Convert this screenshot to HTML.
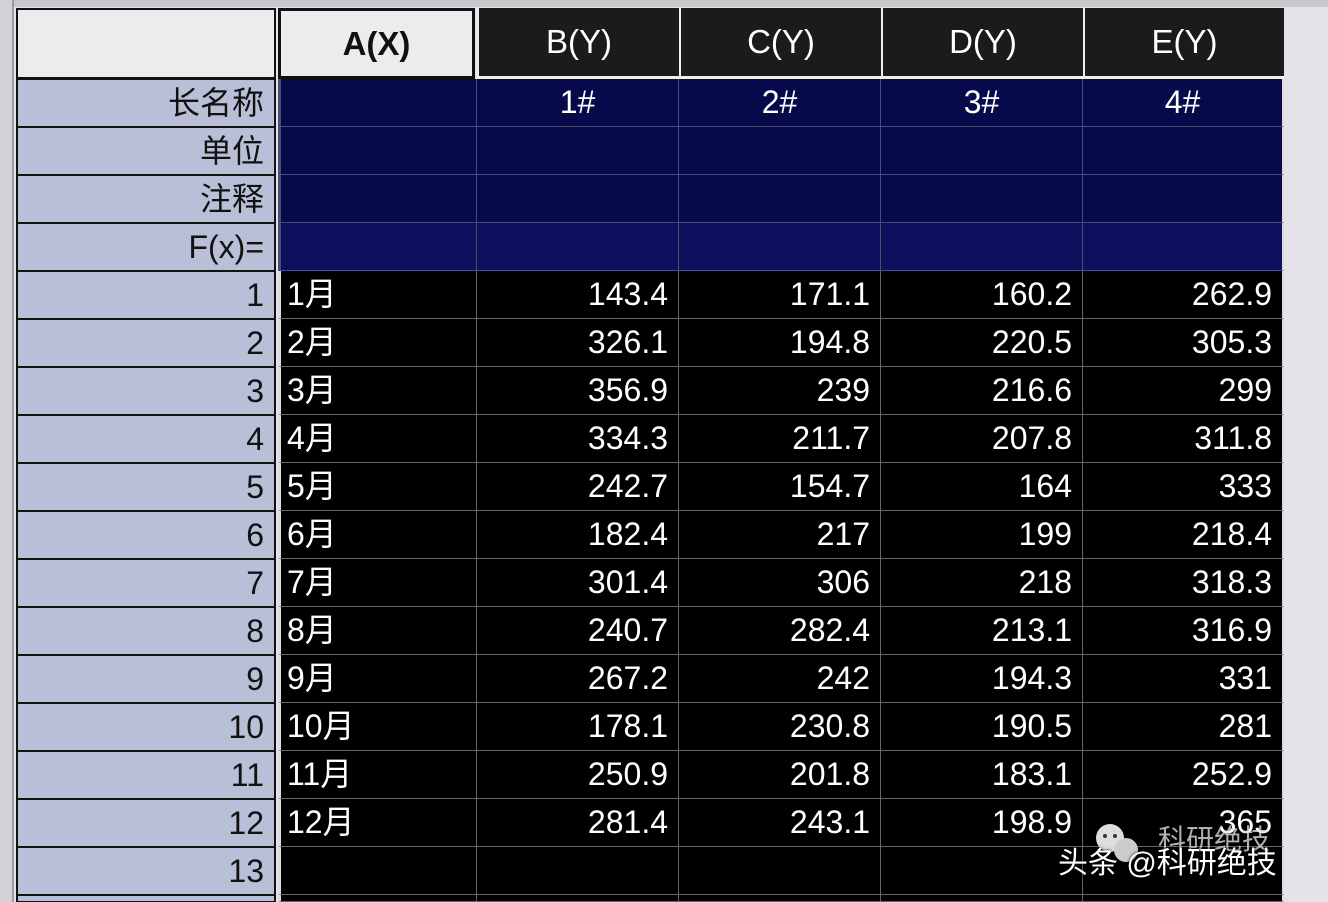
<!DOCTYPE html>
<html><head><meta charset="utf-8"><style>
*{margin:0;padding:0;box-sizing:border-box}
html,body{width:1328px;height:902px;overflow:hidden}
body{background:#e4e4e8;position:relative;font-family:"Liberation Sans","Noto Sans CJK SC",sans-serif}
.strip{position:absolute;left:0;top:0;width:14px;height:902px;background:#d0d2d8;border-right:2px solid #9a9ca4}
.topbar{position:absolute;left:14px;top:0;width:1314px;height:7px;background:#c8c8cc}
.corner{position:absolute;left:16px;top:8px;width:260px;height:71px;background:#ececef;border:2px solid #111}
.hdr{position:absolute;top:8px;height:71px;display:flex;align-items:center;justify-content:center;font-size:33px}
.hA{left:278px;width:197px;background:#ececef;border:3px solid #111;color:#111;font-weight:bold}
.hY{background:#1b1b1b;color:#fff;border-bottom:3px solid #eee;border-left:2px solid #eee}
.row{position:absolute;left:16px;height:48px;width:1268px}
.rh{position:absolute;left:0;top:0;width:260px;height:48px;background:#b9bfd6;border:2px solid #111;border-top-width:1px;border-bottom-width:1px;text-align:right;padding-right:10px;font-size:32px;line-height:46px;color:#111}
.c{position:absolute;top:0;height:48px;border-right:1px solid #666;border-bottom:1px solid #666;color:#fff;font-size:32px;line-height:46px;text-align:right;padding-right:10px}
.navy .c{background:#070a4a;border-color:#4a4c80;text-align:center;padding:0}
.blk .c{background:#000}
.c0{left:262px;width:199px;text-align:left!important;padding-left:6px!important;border-left:3px solid #ddd}
.c1{left:461px;width:202px}
.c2{left:663px;width:202px}
.c3{left:865px;width:202px}
.c4{left:1067px;width:201px;border-right:2px solid #ddd!important}
.wm{position:absolute;left:1058px;top:838px;color:#fff;font-size:30px;text-shadow:0 0 3px #000}
.wm2{position:absolute;left:1158px;top:818px;color:#ddd;font-size:28px;opacity:.8}
.last,.last .rh,.last .c{height:7px}
</style></head><body>
<div class="strip"></div><div class="topbar"></div>
<div class="corner"></div>
<div class="hdr hA">A(X)</div>
<div class="hdr hY" style="left:477px;width:202px">B(Y)</div>
<div class="hdr hY" style="left:679px;width:202px">C(Y)</div>
<div class="hdr hY" style="left:881px;width:202px">D(Y)</div>
<div class="hdr hY" style="left:1083px;width:201px">E(Y)</div>

<div class="row navy" style="top:79px"><div class="rh">长名称</div><div class="c c0"></div><div class="c c1">1#</div><div class="c c2">2#</div><div class="c c3">3#</div><div class="c c4">4#</div></div>
<div class="row navy" style="top:127px"><div class="rh">单位</div><div class="c c0"></div><div class="c c1"></div><div class="c c2"></div><div class="c c3"></div><div class="c c4"></div></div>
<div class="row navy" style="top:175px"><div class="rh">注释</div><div class="c c0"></div><div class="c c1"></div><div class="c c2"></div><div class="c c3"></div><div class="c c4"></div></div>
<div class="row navy" style="top:223px"><div class="rh">F(x)=</div><div class="c c0" style="background:#0b0f5c"></div><div class="c c1" style="background:#0b0f5c"></div><div class="c c2" style="background:#0b0f5c"></div><div class="c c3" style="background:#0b0f5c"></div><div class="c c4" style="background:#0b0f5c"></div></div>

<div class="row blk" style="top:271px"><div class="rh">1</div><div class="c c0">1月</div><div class="c c1">143.4</div><div class="c c2">171.1</div><div class="c c3">160.2</div><div class="c c4">262.9</div></div>
<div class="row blk" style="top:319px"><div class="rh">2</div><div class="c c0">2月</div><div class="c c1">326.1</div><div class="c c2">194.8</div><div class="c c3">220.5</div><div class="c c4">305.3</div></div>
<div class="row blk" style="top:367px"><div class="rh">3</div><div class="c c0">3月</div><div class="c c1">356.9</div><div class="c c2">239</div><div class="c c3">216.6</div><div class="c c4">299</div></div>
<div class="row blk" style="top:415px"><div class="rh">4</div><div class="c c0">4月</div><div class="c c1">334.3</div><div class="c c2">211.7</div><div class="c c3">207.8</div><div class="c c4">311.8</div></div>
<div class="row blk" style="top:463px"><div class="rh">5</div><div class="c c0">5月</div><div class="c c1">242.7</div><div class="c c2">154.7</div><div class="c c3">164</div><div class="c c4">333</div></div>
<div class="row blk" style="top:511px"><div class="rh">6</div><div class="c c0">6月</div><div class="c c1">182.4</div><div class="c c2">217</div><div class="c c3">199</div><div class="c c4">218.4</div></div>
<div class="row blk" style="top:559px"><div class="rh">7</div><div class="c c0">7月</div><div class="c c1">301.4</div><div class="c c2">306</div><div class="c c3">218</div><div class="c c4">318.3</div></div>
<div class="row blk" style="top:607px"><div class="rh">8</div><div class="c c0">8月</div><div class="c c1">240.7</div><div class="c c2">282.4</div><div class="c c3">213.1</div><div class="c c4">316.9</div></div>
<div class="row blk" style="top:655px"><div class="rh">9</div><div class="c c0">9月</div><div class="c c1">267.2</div><div class="c c2">242</div><div class="c c3">194.3</div><div class="c c4">331</div></div>
<div class="row blk" style="top:703px"><div class="rh">10</div><div class="c c0">10月</div><div class="c c1">178.1</div><div class="c c2">230.8</div><div class="c c3">190.5</div><div class="c c4">281</div></div>
<div class="row blk" style="top:751px"><div class="rh">11</div><div class="c c0">11月</div><div class="c c1">250.9</div><div class="c c2">201.8</div><div class="c c3">183.1</div><div class="c c4">252.9</div></div>
<div class="row blk" style="top:799px"><div class="rh">12</div><div class="c c0">12月</div><div class="c c1">281.4</div><div class="c c2">243.1</div><div class="c c3">198.9</div><div class="c c4">365</div></div>
<div class="row blk" style="top:847px"><div class="rh">13</div><div class="c c0"></div><div class="c c1"></div><div class="c c2"></div><div class="c c3"></div><div class="c c4"></div></div>
<div class="row blk last" style="top:895px"><div class="rh"></div><div class="c c0"></div><div class="c c1"></div><div class="c c2"></div><div class="c c3"></div><div class="c c4"></div></div>

<div class="wm2">科研绝技</div>
<svg style="position:absolute;left:1090px;top:818px" width="60" height="50"><circle cx="20" cy="20" r="14" fill="#ddd"/><circle cx="36" cy="32" r="12" fill="#ccc"/><circle cx="15" cy="18" r="2" fill="#333"/><circle cx="25" cy="18" r="2" fill="#333"/></svg>
<div class="wm">头条 @科研绝技</div>
</body></html>
